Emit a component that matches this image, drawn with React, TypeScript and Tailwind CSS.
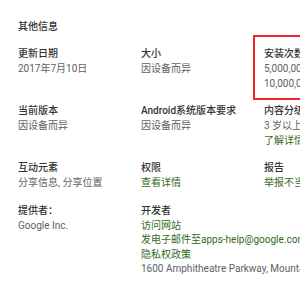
type Line = { text: string; link?: boolean };

type InfoCell = {
  label: string;
  lines: Line[];
  highlight?: boolean;
};

const rows: InfoCell[][] = [
  [
    { label: "更新日期", lines: [{ text: "2017年7月10日" }] },
    { label: "大小", lines: [{ text: "因设备而异" }] },
    {
      label: "安装次数",
      lines: [{ text: "5,000,000,000 -" }, { text: "10,000,000,000" }],
      highlight: true,
    },
  ],
  [
    { label: "当前版本", lines: [{ text: "因设备而异" }] },
    { label: "Android系统版本要求", lines: [{ text: "因设备而异" }] },
    {
      label: "内容分级",
      lines: [{ text: "3 岁以上" }, { text: "了解详情", link: true }],
    },
  ],
  [
    { label: "互动元素", lines: [{ text: "分享信息, 分享位置" }] },
    { label: "权限", lines: [{ text: "查看详情", link: true }] },
    { label: "报告", lines: [{ text: "举报不当内容", link: true }] },
  ],
  [
    { label: "提供者：", lines: [{ text: "Google Inc." }] },
    {
      label: "开发者",
      lines: [
        { text: "访问网站", link: true },
        { text: "发电子邮件至apps-help@google.com", link: true },
        { text: "隐私权政策", link: true },
        { text: "1600 Amphitheatre Parkway, Mountain View 94043" },
      ],
    },
    { label: "", lines: [] },
  ],
];

function Cell({ cell }: { cell: InfoCell }) {
  return (
    <div className="relative whitespace-nowrap">
      {cell.highlight ? (
        <div className="pointer-events-none absolute -left-[11px] -top-[11px] -bottom-[9px] w-[140px] border-2 border-[#f0262b]" />
      ) : null}
      {cell.label ? (
        <div className="text-[10px] leading-[16px] font-medium text-[#333333]">{cell.label}</div>
      ) : null}
      {cell.lines.map((line) => (
        <div
          key={line.text}
          className={
            line.link
              ? "text-[10px] leading-[14.5px] text-[#33691e]"
              : "text-[10px] leading-[14.5px] text-[#616161]"
          }
        >
          {line.text}
        </div>
      ))}
    </div>
  );
}

export default function App() {
  return (
    <div
      className="h-[300px] w-[300px] overflow-hidden bg-white"
      style={{ fontFamily: 'Roboto, "Noto Sans CJK SC", sans-serif' }}
    >
      <div className="w-[440px] pl-[18px] pt-[19px]">
        <h2 className="text-[10px] leading-[16px] font-medium text-[#333333]">其他信息</h2>
        <div className="mt-[11px] grid grid-cols-[123px_123px_123px] gap-y-[12px]">
          {rows.flat().map((cell, i) => (
            <Cell key={i} cell={cell} />
          ))}
        </div>
      </div>
    </div>
  );
}
